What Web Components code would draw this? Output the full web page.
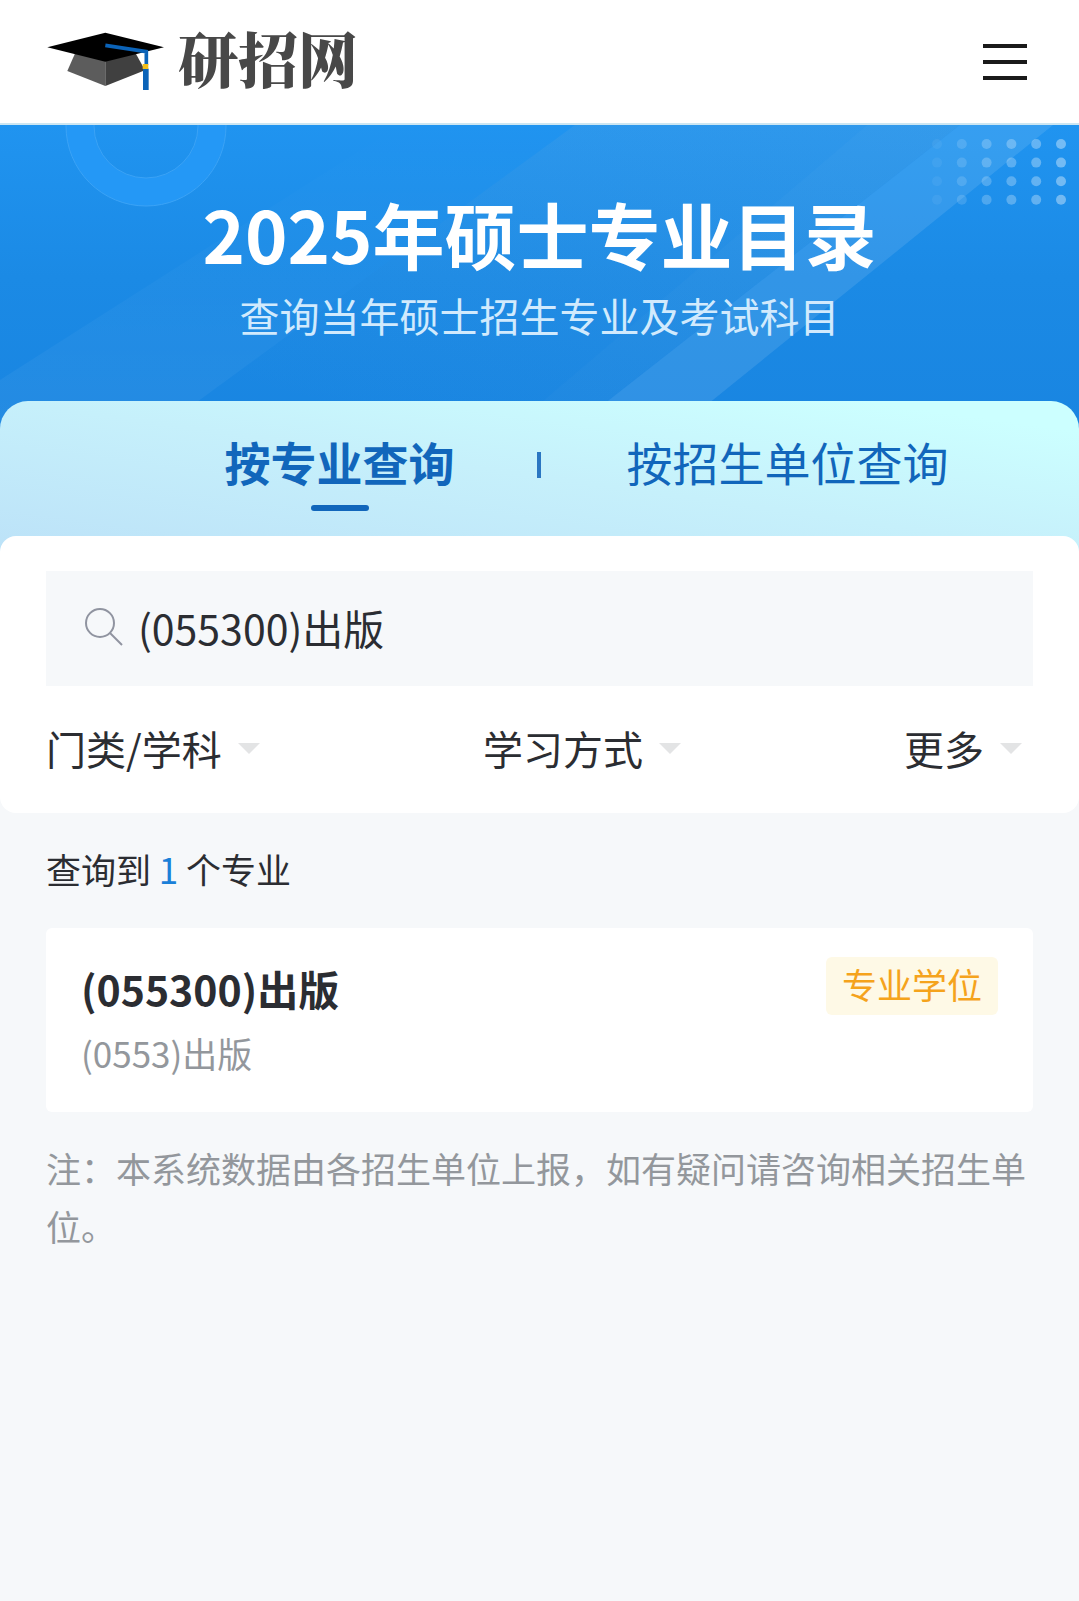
<!DOCTYPE html>
<html lang="zh-CN">
<head>
<meta charset="utf-8">
<meta name="viewport" content="width=device-width, initial-scale=1">
<title>2025年硕士专业目录</title>
<style>
body {
    margin: 0;
    background: #f6f8fa;
    color: #2b2d32;
    font-family: "Noto Sans CJK SC", sans-serif;
    font-size: 35px;
    line-height: 50px;
}
</style>
</head>
<body>

<site-header></site-header>
<main>
    <page-banner>
        <span slot="title">2025年硕士专业目录</span>
        <span slot="subtitle">查询当年硕士招生专业及考试科目</span>
    </page-banner>
    <query-tabs></query-tabs>
    <search-panel value="(055300)出版"></search-panel>
    <result-list count="1">
        <major-card>
            <span slot="name">(055300)出版</span>
            <span slot="tag">专业学位</span>
            <span slot="parent">(0553)出版</span>
        </major-card>
        <span slot="note">注：本系统数据由各招生单位上报，如有疑问请咨询相关招生单位。</span>
    </result-list>
</main>

<script>
const header = document.createElement("template");
header.innerHTML = `
<style>
:host{
    display: block;
    background: #fff;
    border-bottom: 2px solid #cce6f2;
}
header{
    display: flex;
    align-items: center;
    justify-content: space-between;
    height: 123px;
    padding: 0 52px 0 46px;
}
a{
    display: flex;
    align-items: center;
    gap: 13px;
    color: #484848;
    text-decoration: none;
    font: 900 60px/80px "Noto Serif CJK SC", "Noto Sans CJK SC", serif;
}
a span{
    padding-bottom: 10px;
}
button{
    display: flex;
    padding: 0;
    border: 0;
    background: none;
}
</style>
<header>
    <a href="#">
        <svg width="119" height="59" viewBox="48 66 357 177" aria-hidden="true">
            <path d="M136 128 112 183 226 228V140z" fill="#5c5c5c"/>
            <path d="M316 128 345 181 226 228V140z" fill="#404040"/>
            <path d="M52 112 226 68 402 112 226 155z" fill="#000"/>
            <path d="M226 106 349 125V165" fill="none" stroke="#0b63b8" stroke-width="11"/>
            <path d="M339 176h17v64h-17z" fill="#0b63b8"/>
            <path d="M338 162h17v15h-17z" fill="#f2be1a"/>
        </svg>
        <span>研招网</span>
    </a>
    <button type="button" aria-label="菜单">
        <svg width="44" height="38" viewBox="0 0 44 38"><path d="M0 3h44M0 19h44M0 35h44" stroke="#1a1a1a" stroke-width="4"/></svg>
    </button>
</header>
`;

const banner = document.createElement("template");
banner.innerHTML = `
<style>
:host{
    display: block;
    position: relative;
    padding: 64px 0 86px;
    background: linear-gradient(#2094f0, #1b8ae5 50%, #1985e1);
    color: #fff;
    text-align: center;
}
svg{
    position: absolute;
    inset: 0;
    width: 100%;
    height: 100%;
}
h1, p{
    position: relative;
    margin: 0;
}
h1{
    font-size: 72px;
    line-height: 88px;
}
p{
    margin-top: 10px;
    font-size: 40px;
    line-height: 56px;
    color: #d1eafd;
}
</style>
<svg viewBox="0 0 1079 304" preserveAspectRatio="xMidYMin slice" aria-hidden="true">
    <defs>
        <linearGradient id="low" x1="0" y1="1" x2="0" y2="0">
            <stop offset="0" stop-color="#fff" stop-opacity=".05"/>
            <stop offset="1" stop-color="#fff" stop-opacity="0"/>
        </linearGradient>
        <linearGradient id="high" x1="1" y1="0" x2="0.3" y2="1">
            <stop offset="0" stop-color="#a4b8c8" stop-opacity=".12"/>
            <stop offset="1" stop-color="#a4b8c8" stop-opacity="0"/>
        </linearGradient>
    </defs>
    <path d="M0 255 400 0H575L160 304H0z" fill="url(#low)"/>
    <path d="M575 0H960L572 304H160z" fill="url(#high)"/>
    <path d="M867 0H960L572 304H510z" fill="#fff" fill-opacity=".02"/>
    <path d="M960 0H1053L677 304H572z" fill="#fff" fill-opacity=".1"/>
    <circle cx="146" cy="1" r="66" fill="none" stroke="#2498f6" stroke-width="28"/>
    <circle cx="146" cy="1" r="80" fill="none" stroke="#3ba3f6"/>
    <circle cx="146" cy="1" r="52" fill="none" stroke="#3ba3f6"/>
    <g id="dots" fill="#fff"></g>
</svg>
<h1><slot name="title"></slot></h1>
<p><slot name="subtitle"></slot></p>
`;

const tabs = document.createElement("template");
tabs.innerHTML = `
<style>
:host{
    display: block;
    position: relative;
    margin-top: -28px;
    border-radius: 28px 28px 0 0;
    background: linear-gradient(to top right, #bce2f8, #c6f0fb 50%, #ccffff 90%);
}
nav{
    display: flex;
    justify-content: center;
    gap: 82px;
    padding: 28px 0 41px 94px;
}
button{
    display: grid;
    justify-items: center;
    gap: 12px;
    padding: 0;
    border: 0;
    background: none;
    color: #1166bb;
    font: inherit;
    font-size: 46px;
    line-height: 64px;
}
.active{
    font-weight: bold;
}
.active::after{
    content: "";
    width: 58px;
    height: 6px;
    border-radius: 3px;
    background: #1166bb;
}
i{
    width: 4px;
    height: 26px;
    margin: 23px 4px 0 0;
    background: #2a76c2;
}
</style>
<nav>
    <button type="button" class="active" aria-current="true">按专业查询</button>
    <i></i>
    <button type="button">按招生单位查询</button>
</nav>
`;

const panel = document.createElement("template");
panel.innerHTML = `
<style>
:host{
    display: block;
    position: relative;
    margin-top: -16px;
    padding: 35px 46px 37px;
    border-radius: 16px;
    background: #fff;
}
.search{
    display: flex;
    align-items: center;
    gap: 14px;
    height: 111px;
    padding: 0 38px 4px;
    background: #f6f8fa;
}
input, select, .more{
    padding: 0;
    border: 0;
    outline: 0;
    background: none;
    color: inherit;
    font: inherit;
    font-size: 40px;
    line-height: 56px;
}
input{
    flex: 1;
    min-width: 0;
    font-size: 41px;
}
select{
    appearance: none;
}
.filters{
    display: flex;
    justify-content: space-between;
    margin-top: 34px;
}
.filters > *{
    display: flex;
    align-items: center;
    gap: 16px;
    padding-right: 11px;
}
</style>
<label class="search">
    <svg width="40" height="40" viewBox="0 0 40 40" fill="none" stroke="#9094a0" stroke-width="2" aria-hidden="true">
        <circle cx="16" cy="16" r="14"/><path d="M26 26 38 38"/>
    </svg>
    <input type="text" aria-label="专业">
</label>
<div class="filters">
    <label><select aria-label="门类/学科"><option>门类/学科</option></select><svg width="22" height="16"><path d="M0 3h22L11 14z" fill="#e3e4e5"/></svg></label>
    <label><select aria-label="学习方式"><option>学习方式</option></select><svg width="22" height="16"><path d="M0 3h22L11 14z" fill="#e3e4e5"/></svg></label>
    <button type="button" class="more">更多<svg width="22" height="16"><path d="M0 3h22L11 14z" fill="#e3e4e5"/></svg></button>
</div>
`;

const list = document.createElement("template");
list.innerHTML = `
<style>
:host{
    display: block;
    padding: 31px 46px;
}
p{
    margin: 0;
}
b{
    color: #1a80d8;
    font-weight: normal;
}
.cards{
    margin: 34px 0 27px;
}
.note{
    color: #93979c;
    line-height: 58px;
}
</style>
<p>查询到 <b></b> 个专业</p>
<div class="cards"><slot></slot></div>
<p class="note"><slot name="note"></slot></p>
`;

const card = document.createElement("template");
card.innerHTML = `
<style>
:host{
    display: block;
    padding: 29px 35px 34px;
    border-radius: 6px;
    background: #fff;
}
.top{
    display: flex;
    align-items: flex-start;
    justify-content: space-between;
}
h2{
    margin: 0;
    font-size: 41px;
    line-height: 62px;
}
.tag{
    padding: 2px 16px 6px;
    border-radius: 6px;
    background: #fef9e6;
    color: #f5a31c;
}
p{
    margin: 9px 0 0;
    color: #93979c;
}
</style>
<div class="top">
    <h2><slot name="name"></slot></h2>
    <div class="tag"><slot name="tag"></slot></div>
</div>
<p><slot name="parent"></slot></p>
`;


class SiteHeader extends HTMLElement{
    constructor(){
        super();
        this.attachShadow({mode:'open'});
        this.shadowRoot.append(header.content.cloneNode(true));
    }
}

class PageBanner extends HTMLElement{
    constructor(){
        super();
        this.attachShadow({mode:'open'});
        this.shadowRoot.append(banner.content.cloneNode(true));
        this.drawDots();
    }

    // dots fade out towards the left
    drawDots() {
        const opacity = [0.06, 0.14, 0.22, 0.27, 0.31, 0.38];
        let circles = '';
        for (let row = 0; row < 4; row++) {
            opacity.forEach((value, col) => {
                circles += `<circle cx="${937 + col * 24.8}" cy="${19 + row * 18.6}" r="5" fill-opacity="${value}"/>`;
            });
        }
        this.shadowRoot.querySelector('#dots').innerHTML = circles;
    }
}

class QueryTabs extends HTMLElement{
    constructor(){
        super();
        this.attachShadow({mode:'open'});
        this.shadowRoot.append(tabs.content.cloneNode(true));

        const buttons = this.shadowRoot.querySelectorAll('button');
        buttons.forEach(button => {
            button.addEventListener('click', () => {
                buttons.forEach(item => {
                    item.classList.toggle('active', item === button);
                    item.setAttribute('aria-current', item === button);
                });
            });
        });
    }
}

class SearchPanel extends HTMLElement{
    constructor(){
        super();
        this.attachShadow({mode:'open'});
        this.shadowRoot.append(panel.content.cloneNode(true));
    }

    connectedCallback() {
        this.shadowRoot.querySelector('input').value = this.getAttribute('value') || '';
    }
}

class ResultList extends HTMLElement{
    constructor(){
        super();
        this.attachShadow({mode:'open'});
        this.shadowRoot.append(list.content.cloneNode(true));
    }

    connectedCallback() {
        this.shadowRoot.querySelector('b').textContent = this.getAttribute('count') || '0';
    }
}

class MajorCard extends HTMLElement{
    constructor(){
        super();
        this.attachShadow({mode:'open'});
        this.shadowRoot.append(card.content.cloneNode(true));
    }
}

customElements.define('site-header', SiteHeader);
customElements.define('page-banner', PageBanner);
customElements.define('query-tabs', QueryTabs);
customElements.define('search-panel', SearchPanel);
customElements.define('result-list', ResultList);
customElements.define('major-card', MajorCard);
</script>
</body>
</html>
